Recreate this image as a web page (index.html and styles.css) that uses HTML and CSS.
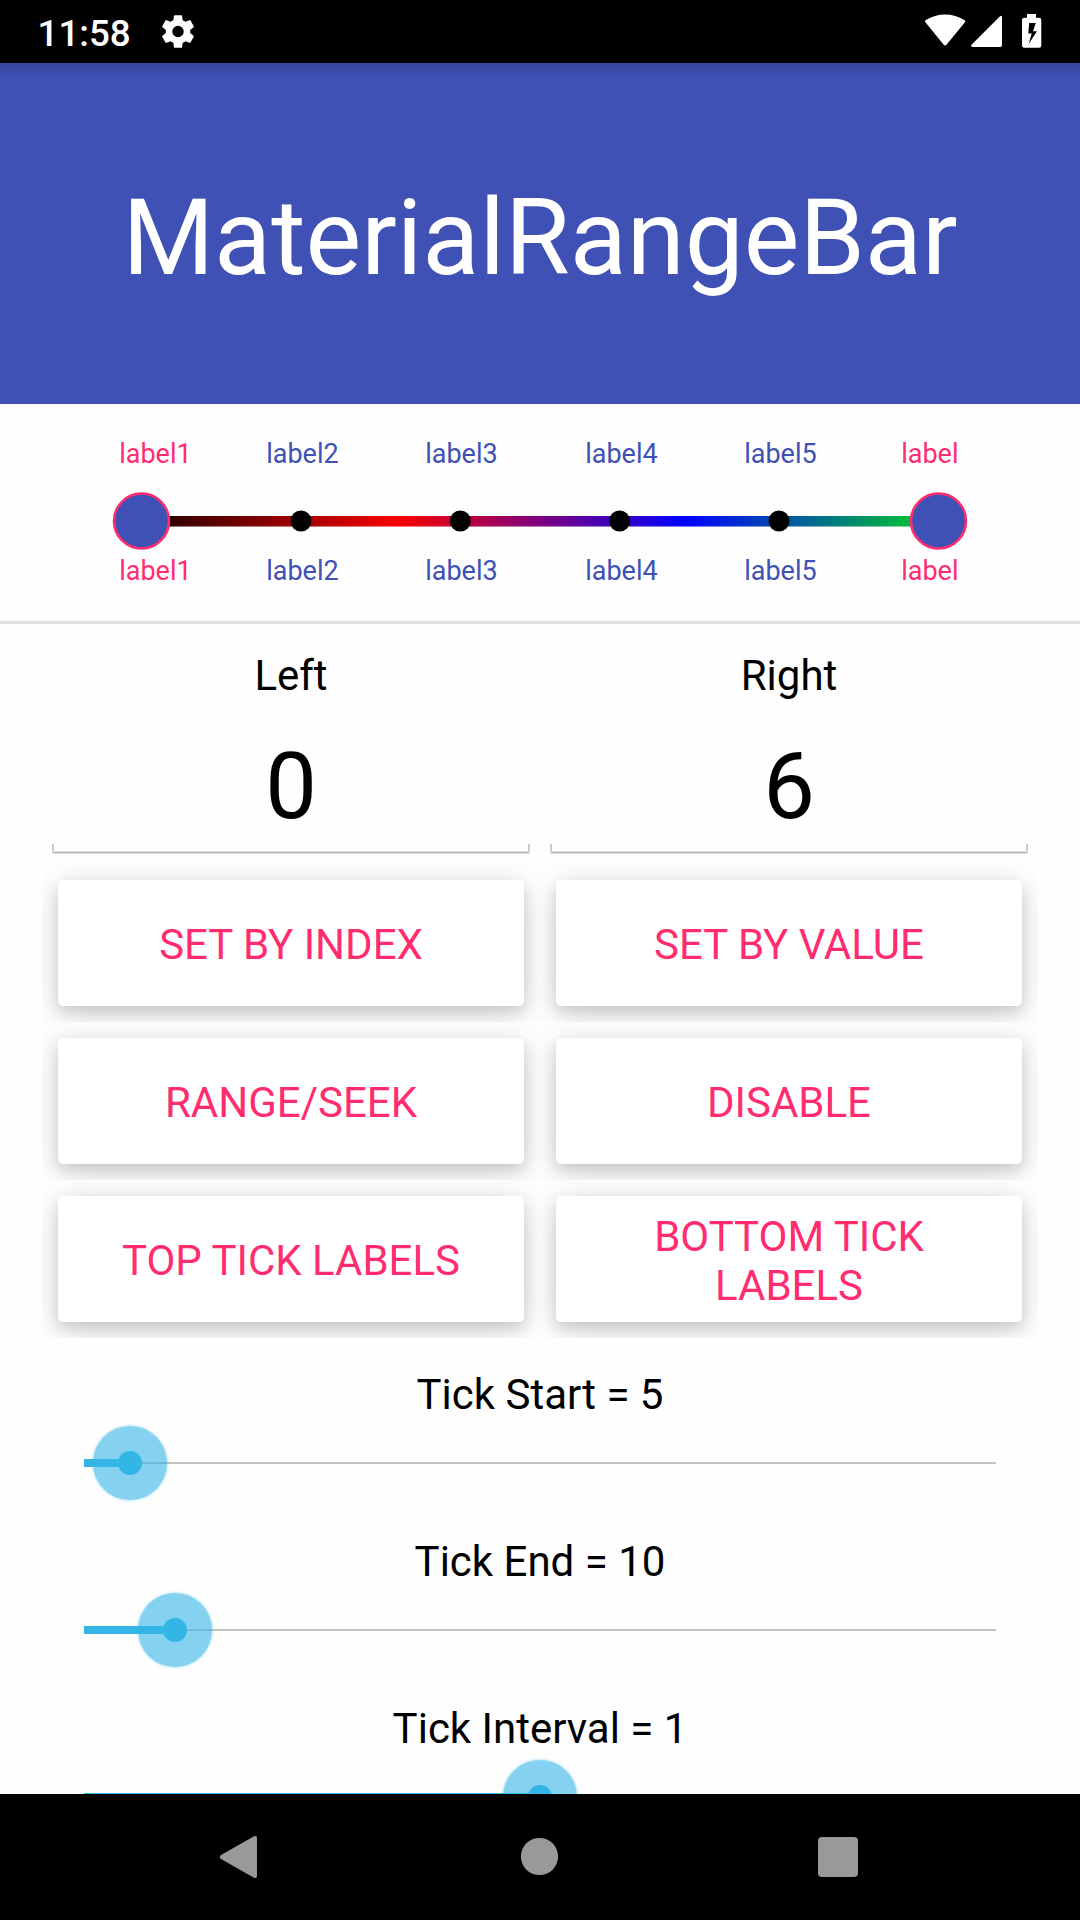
FILE: index.html
```html
<!DOCTYPE html>
<html lang="en">
<head>
<meta charset="utf-8">
<title>MaterialRangeBar</title>
<link rel="stylesheet" href="styles.css">
</head>
<body>
<div class="screen">
  <div class="status-bar">
    <span class="clock">11:58</span>
    <svg class="gear" width="32" height="33" viewBox="2.2 1.9 19.6 20.2"><path fill="#fff" fill-rule="evenodd" d="M19.43 12.98c.04-.32.07-.64.07-.98s-.03-.66-.07-.98l2.11-1.65c.19-.15.24-.42.12-.64l-2-3.46c-.12-.22-.39-.3-.61-.22l-2.49 1c-.52-.4-1.08-.73-1.69-.98l-.38-2.65A.49.49 0 0 0 14 2h-4c-.25 0-.46.18-.49.42l-.38 2.65c-.61.25-1.17.59-1.69.98l-2.49-1c-.23-.09-.49 0-.61.22l-2 3.46c-.13.22-.07.49.12.64l2.110 1.65c-.04.32-.07.65-.07.98s.03.66.07.98l-2.110 1.65c-.19.15-.24.42-.12.64l2 3.46c.12.22.39.3.61.22l2.49-1c.52.4 1.08.73 1.69.98l.38 2.65c.03.24.24.42.49.42h4c.25 0 .46-.18.49-.42l.38-2.65c.61-.25 1.17-.59 1.69-.98l2.49 1c.23.09.49 0 .61-.22l2-3.46c.12-.22.07-.49-.12-.64l-2.110-1.65zM12 15.500a3.500 3.500 0 1 1 0-7 3.500 3.500 0 0 1 0 7z"/></svg>
    <svg class="signals" width="120" height="36" viewBox="0 0 120 36" fill="#fff">
      <path d="M1.600 8.400Q.2 6.900 1.900 6C13 -1.500 29.300 -1.500 40.300 6Q42 6.900 40.700 8.400L22.700 30.600Q21.100 32.400 19.500 30.600Z"/>
      <path d="M76 2.200Q77.700 1 78 3V31Q78 33 76 33H49Q46 32.800 47.500 30.700Z"/>
      <path fill-rule="evenodd" d="M103 0H112V3.700H115Q117.300 3.700 117.300 6V31.500Q117.300 33.800 115 33.800H100.300Q98 33.800 98 31.500V6Q98 3.700 100.300 3.700H103ZM105.200 9L104.300 19.500H107.700L104.600 30L113 17.200H109L111.800 9Z"/>
    </svg>
  </div>

  <header class="app-header"><h1 class="title">MaterialRangeBar</h1></header>

  <svg class="range-bar" width="1080" height="217" viewBox="0 404 1080 217">
    <defs>
      <linearGradient id="track" gradientUnits="userSpaceOnUse" x1="111" y1="0" x2="972" y2="0">
        <stop offset="0" stop-color="#000"/>
        <stop offset=".3333" stop-color="#f80000"/>
        <stop offset=".6667" stop-color="#00f"/>
        <stop offset="1" stop-color="#00ee04"/>
      </linearGradient>
    </defs>
    <rect x="141.500" y="516" width="797" height="10.500" fill="url(#track)"/>
    <g fill="#000">
      <circle cx="301" cy="521" r="10.500"/><circle cx="460.300" cy="521" r="10.500"/>
      <circle cx="619.600" cy="521" r="10.500"/><circle cx="779" cy="521" r="10.500"/>
    </g>
    <g class="thumb"><circle cx="141.500" cy="521" r="27.500"/><circle cx="938.500" cy="521" r="27.500"/></g>
    <g class="tick-label">
      <text class="selected" x="119.200" y="463">label1</text><text x="266.200" y="463">label2</text><text x="425.200" y="463">label3</text>
      <text x="585.200" y="463">label4</text><text x="744.200" y="463">label5</text><text class="selected" x="901.200" y="463">label</text>
      <text class="selected" x="119.200" y="580">label1</text><text x="266.200" y="580">label2</text><text x="425.200" y="580">label3</text>
      <text x="585.200" y="580">label4</text><text x="744.200" y="580">label5</text><text class="selected" x="901.200" y="580">label</text>
    </g>
  </svg>

  <main class="settings">
    <div class="fields">
      <div class="field"><span class="caption">Left</span><div class="value">0</div></div>
      <div class="field"><span class="caption">Right</span><div class="value">6</div></div>
    </div>
    <div class="buttons">
      <div class="cell"><button class="btn">SET BY INDEX</button></div>
      <div class="cell"><button class="btn">SET BY VALUE</button></div>
      <div class="cell"><button class="btn">RANGE/SEEK</button></div>
      <div class="cell"><button class="btn">DISABLE</button></div>
      <div class="cell"><button class="btn">TOP TICK LABELS</button></div>
      <div class="cell"><button class="btn">BOTTOM TICK LABELS</button></div>
    </div>
    <div class="seek">
      <span class="caption">Tick Start = 5</span>
      <div class="slider"><div class="progress" style="width:5%"><i class="knob"></i></div></div>
    </div>
    <div class="seek">
      <span class="caption">Tick End = 10</span>
      <div class="slider"><div class="progress" style="width:10%"><i class="knob"></i></div></div>
    </div>
    <div class="seek">
      <span class="caption">Tick Interval = 1</span>
      <div class="slider"><div class="progress" style="width:50%"><i class="knob"></i></div></div>
    </div>
  </main>

  <nav class="nav-bar">
    <svg width="1080" height="126" viewBox="0 0 1080 126" fill="#999">
      <path d="M254 42.300Q257 41 257 44V82Q257 85 254 83.700L221 65Q218.500 63 221 61Z"/>
      <circle cx="539.500" cy="62.500" r="18.600"/>
      <rect x="818" y="43" width="40" height="40" rx="4"/>
    </svg>
  </nav>
</div>
</body>
</html>
```
FILE: styles.css
```css
* { box-sizing: border-box; }
body { margin: 0; font-family: Roboto, "Liberation Sans", sans-serif; background: #fefefe; color: #000; }
.screen { width: 1080px; height: 1920px; overflow: hidden; display: flex; flex-direction: column; }

.status-bar { flex: none; height: 63px; background: #000; color: #fff; display: flex; align-items: flex-start; padding: 14px 36px 0 37.5px; }
.clock { font-size: 36.75px; font-weight: 500; line-height: 40px; width: 124.5px; white-space: nowrap; }
.gear { margin-top: 1px; }
.signals { margin-left: auto; width: 120px; }

.app-header { flex: none; height: 341px; display: flex; justify-content: center; background: linear-gradient(rgba(0,0,0,.13), rgba(0,0,0,0) 18px) #3f51b5; }
.title { margin: 0; padding: 114px 0 0; font-size: 105px; font-weight: 400; line-height: 123px; color: #fff; }

.range-bar { flex: none; display: block; }
.thumb { fill: #3f51b5; stroke: #ff2d6f; stroke-width: 2.600px; }
.tick-label { font-size: 27px; fill: #3f51b5; }
.selected { fill: #ff2d6f; }

.settings { flex: none; height: 1173px; overflow: hidden; border-top: 3px solid #e0e0e0; padding: 0 42px; }
.fields { display: grid; grid-template-columns: 1fr 1fr; height: 240px; }
.field { display: flex; flex-direction: column; padding: 27px 10px 0; }
.caption { display: block; height: 50px; font-size: 42px; line-height: 50px; text-align: center; }
.value { height: 143px; margin-top: 10px; padding-top: 22px; font-size: 92px; line-height: 108px; text-align: center;
  background:
    linear-gradient(#b2b2b2, #b2b2b2) 1px calc(100% - 1px) / calc(100% - 2px) 1px no-repeat,
    linear-gradient(#e2e2e2, #e2e2e2) 0 100% / 100% 3px no-repeat,
    linear-gradient(#c8c8c8, #c8c8c8) 0 100% / 2px 10px no-repeat,
    linear-gradient(#c8c8c8, #c8c8c8) 100% 100% / 2px 10px no-repeat; }

.buttons { display: grid; grid-template-columns: 1fr 1fr; grid-auto-rows: 158px; }
.cell { padding: 16px; overflow: hidden; }
.btn { display: block; width: 100%; height: 126px; margin: 0; border: 0; border-radius: 5px; padding: 3px 40px 0; background: #fff; color: #ff2d6f;
  font: 400 42px/49px Roboto, "Liberation Sans", sans-serif; box-shadow: 0 6px 14px rgba(0,0,0,.12), 0 7px 34px rgba(0,0,0,.16); }

.seek { height: 167px; padding: 32px 42px 0; }
.slider { height: 74px; margin-top: 6px; display: flex; align-items: center; background: linear-gradient(#c2c2c2, #c2c2c2) 0 36px / 100% 2px no-repeat; }
.progress { height: 8px; display: flex; align-items: center; justify-content: flex-end; background: #33b5e5; }
.knob { flex: none; width: 74px; height: 74px; margin-right: -37px; border-radius: 50%;
  background: radial-gradient(circle, #33b5e5 11.500px, rgba(51,181,229,.6) 12.500px); box-shadow: 0 0 3px rgba(51,181,229,.6); }

.nav-bar { flex: none; height: 126px; background: #000; }
.nav-bar svg { display: block; }
```
